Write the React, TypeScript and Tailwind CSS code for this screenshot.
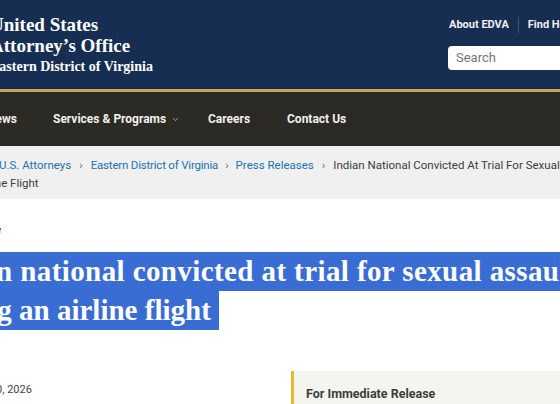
import { ChevronDown } from 'lucide-react';

const serif = { fontFamily: '"Liberation Serif", "DejaVu Serif", serif' };

export default function App() {
  return (
    <div className="relative h-[404px] w-[560px] overflow-hidden bg-white font-['Roboto','Liberation_Sans',Arial,sans-serif]">
      {/* top banner */}
      <header className="flex h-[89px] bg-[#162e51] text-white">
        <div className="ml-[-10px] pt-[14px] font-bold" style={serif}>
          <p className="text-[19px] leading-[21px]">United States</p>
          <p className="text-[19px] leading-[21px]">Attorney’s Office</p>
          <p className="mt-[1px] text-[14px] leading-[20px]">Eastern District of Virginia</p>
        </div>
        <div className="ml-auto mr-[-60px] w-[172px] pt-[17px]">
          <div className="flex items-center whitespace-nowrap text-[11px] font-bold leading-[16px] text-[#f0f0f0]">
            <span className="ml-[1px]">About EDVA</span>
            <span className="mx-[9px] h-[16px] w-px bg-[#3d5375]" />
            <span>Find Help</span>
          </div>
          <div className="mt-[13px] flex h-[24px] items-center rounded-[4px] bg-white px-[8px] text-[13px] text-[#757575]">
            Search
          </div>
        </div>
      </header>
      <div className="h-[3px] bg-[#c5a65f]" />

      {/* main nav */}
      <nav className="flex h-[54px] items-center whitespace-nowrap bg-[#2b2a25] text-[12px] font-bold text-[#f0f0f0]">
        <span className="ml-[-13px] w-[66px]">News</span>
        <span className="flex w-[155px] items-center">
          Services &amp; Programs
          <ChevronDown size={9} strokeWidth={2} className="ml-[5px] text-[#bdbdbd]" />
        </span>
        <span className="w-[79px]">Careers</span>
        <span>Contact Us</span>
      </nav>

      {/* breadcrumb */}
      <div className="h-[53px] whitespace-nowrap bg-[#f0f0f0] pt-[10px] text-[11.5px] leading-[18px] text-[#3d3d3d]">
        <div className="ml-[-1px]">
          <span className="text-[#2372b0]">U.S. Attorneys</span>
          <span className="mx-[8px] text-[#6b6b6b]">›</span>
          <span className="tracking-[-0.2px] text-[#2372b0]">Eastern District of Virginia</span>
          <span className="mx-[7px] text-[#6b6b6b]">›</span>
          <span className="text-[#2372b0]">Press Releases</span>
          <span className="mx-[8px] text-[#6b6b6b]">›</span>
          <span>Indian National Convicted At Trial For Sexual Assault During An</span>
        </div>
        <div className="ml-[-25px]">Airline Flight</div>
      </div>

      {/* article */}
      <div className="pt-[24px]">
        <p className="ml-[-68px] whitespace-nowrap text-[11px] leading-[14px] text-[#1b1b1b]">Press Release</p>
        <h1 className="ml-[-72px] mt-[15px] whitespace-nowrap text-[29px] font-bold leading-[39px] text-white" style={serif}>
          <div className="w-[700px] bg-[#3a6dd3] tracking-[0.4px]">Indian national convicted at trial for sexual assault</div>
          <div className="w-[291px] bg-[#3a6dd3]">during an airline flight</div>
        </h1>
        <div className="mt-[41px] flex">
          <p className="ml-[-86px] mt-[12px] w-[377px] whitespace-nowrap text-[11px] leading-[14px] text-[#454545]">
            Friday, January 30, 2026
          </p>
          <div className="h-[60px] flex-1 border-l-[3px] border-[#e8b92f] bg-[#f5f5f0] pl-[12px] pt-[14px]">
            <p className="whitespace-nowrap text-[12.5px] font-bold text-[#3d3d3d]">For Immediate Release</p>
          </div>
        </div>
      </div>
    </div>
  );
}
